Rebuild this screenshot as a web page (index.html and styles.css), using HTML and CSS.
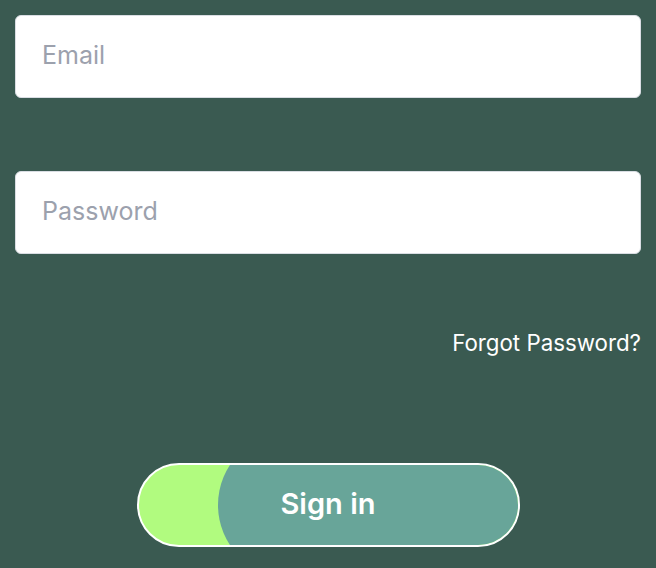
FILE: index.html
```html
<!DOCTYPE html>
<html lang="en">
<head>
  <meta charset="UTF-8" />
  <title>Sign in</title>
  <link rel="stylesheet" href="styles.css">
</head>
<body>
  <form class="login">
    <input class="field" type="email" placeholder="Email">
    <input class="field" type="password" placeholder="Password">
    <a class="forgot" href="#">Forgot Password?</a>
    <div class="actions">
      <button class="signin" type="button"><span>Sign in</span></button>
    </div>
  </form>
</body>
</html>
```
FILE: styles.css
```css
body {
  margin: 0;
  background: #3a5a51;
  font-family: Inter, Lato, sans-serif;
}

.login {
  display: flex;
  flex-direction: column;
  padding: 15px 15px 0 15px;
}

.field {
  box-sizing: border-box;
  height: 83px;
  width: 100%;
  border: 1px solid #d9dde3;
  border-radius: 6px;
  background: #fff;
  padding: 0 0 4px 26px;
  font-family: inherit;
  font-size: 25px;
  color: #333;
  outline: none;
}

.field::placeholder {
  color: #9ca1ad;
}

.field + .field {
  margin-top: 73px;
}

.forgot {
  align-self: flex-end;
  margin-top: 75px;
  color: #fff;
  text-decoration: none;
  font-size: 22.3px;
  line-height: 28px;
}

.actions {
  display: flex;
  justify-content: center;
  margin-top: 106px;
}

.signin {
  position: relative;
  overflow: hidden;
  box-sizing: border-box;
  width: 383px;
  height: 84px;
  border: 2px solid #fff;
  border-radius: 42px;
  background: #b1fb7f;
  color: #fff;
  font-family: inherit;
  font-size: 29px;
  font-weight: 600;
  cursor: pointer;
  padding: 0 0 4px 0;
}

.signin::before {
  content: "";
  position: absolute;
  left: 79px;
  top: -33px;
  width: 400px;
  height: 146px;
  border-radius: 73px 0 0 73px;
  background: #68a599;
}

.signin span {
  position: relative;
}
```
